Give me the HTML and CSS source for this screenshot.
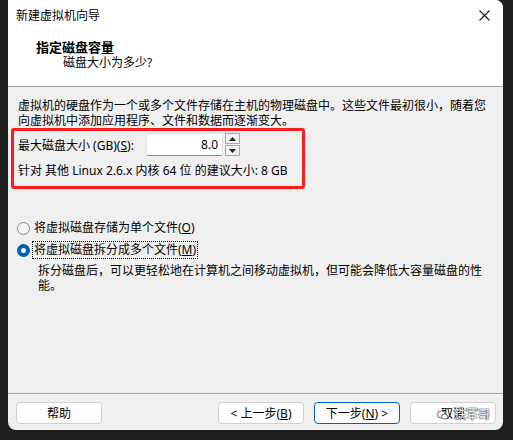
FILE: index.html
```html
<!DOCTYPE html>
<html lang="zh-CN">
<head>
    <meta charset="UTF-8">
    <title>新建虚拟机向导</title>
    <link rel="stylesheet" href="styles.css">
</head>
<body>
<div class="window">
    <div class="titlebar">
        <span class="titlebar__text">新建虚拟机向导</span>
        <span class="close">
            <svg width="11" height="11" viewBox="0 0 11 11"><path d="M0.5 0.5 L10.5 10.5 M10.5 0.5 L0.5 10.5" stroke="#1a1a1a" stroke-width="1.1" fill="none"/></svg>
        </span>
    </div>

    <div class="header">
        <div class="header__title">指定磁盘容量</div>
        <div class="header__sub">磁盘大小为多少?</div>
    </div>

    <div class="content">
        <p class="intro">虚拟机的硬盘作为一个或多个文件存储在主机的物理磁盘中。这些文件最初很小，随着您<br>向虚拟机中添加应用程序、文件和数据而逐渐变大。</p>

        <div class="highlight">
            <div class="size-row">
                <label class="size-label">最大磁盘大小 (GB)(<u>S</u>):</label>
                <input type="text" class="size-input" value="8.0">
                <div class="spinner">
                    <button class="spin"><svg width="7" height="4" viewBox="0 0 7 4"><path d="M0 4 L3.5 0 L7 4 Z" fill="#222"/></svg></button>
                    <button class="spin"><svg width="7" height="4" viewBox="0 0 7 4"><path d="M0 0 L3.5 4 L7 0 Z" fill="#222"/></svg></button>
                </div>
            </div>
            <div class="hint">针对 其他 Linux 2.6.x 内核 64 位 的建议大小: 8 GB</div>
        </div>

        <div class="options">
            <div class="radio-row">
                <span class="radio"></span>
                <span class="radio-label">将虚拟磁盘存储为单个文件(<u>O</u>)</span>
            </div>
            <div class="radio-row">
                <span class="radio radio--on"></span>
                <span class="radio-label radio-label--focus">将虚拟磁盘拆分成多个文件(<u>M</u>)</span>
            </div>
            <p class="desc">拆分磁盘后，可以更轻松地在计算机之间移动虚拟机，但可能会降低大容量磁盘的性<br>能。</p>
        </div>
    </div>

    <div class="footer">
        <button class="btn">帮助</button>
        <div class="footer__right">
            <button class="btn">&lt; 上一步(<u>B</u>)</button>
            <button class="btn btn--default">下一步(<u>N</u>) &gt;</button>
            <button class="btn btn--cancel">取消
                <span class="watermark">
                    <svg width="11" height="10" viewBox="0 0 11 10"><ellipse cx="4.5" cy="4.5" rx="4" ry="3.6" fill="#fff" stroke="#444" stroke-width="0.8"/><ellipse cx="7.5" cy="6.5" rx="3" ry="2.6" fill="#fff" stroke="#444" stroke-width="0.8"/></svg>
                    <span class="watermark__text">铁军哥</span>
                </span>
            </button>
        </div>
    </div>
</div>
</body>
</html>
```

FILE: styles.css
```css
body {
  margin: 0;
  background: #1f1f1f;
  font-family: "Noto Sans", "Noto Sans CJK SC", sans-serif;
  font-size: 12px;
  color: #000;
}

.window {
  margin-left: 8px;
  width: 495px;
  height: 430px;
  background: #f0f0f0;
  border-radius: 0 8px 8px 8px;
  overflow: hidden;
  display: flex;
  flex-direction: column;
}

.titlebar {
  height: 30px;
  background: #fff;
  display: flex;
  align-items: center;
  justify-content: space-between;
  padding: 0 8px 0 8px;
}

.close {
  display: flex;
  margin-right: 5px;
}

.header {
  background: #fff;
  height: 57px;
  border-bottom: 1px solid #a0a0a0;
  box-sizing: border-box;
  padding-top: 9px;
}

.header__title {
  margin-left: 28px;
  font-size: 13px;
  font-weight: bold;
  line-height: 16px;
}

.header__sub {
  margin-left: 55px;
  line-height: 16px;
}

.content {
  flex: 1;
  padding-top: 11px;
}

.intro {
  margin: 0 0 0 10px;
  line-height: 15px;
}

.highlight {
  margin-left: 3px;
  width: 294px;
  height: 61px;
  box-sizing: border-box;
  border: 3px solid #ff1c1c;
  border-radius: 3px;
  padding: 2px 0 0 4px;
}

.size-row {
  display: flex;
  align-items: center;
  height: 23px;
}

.size-label {
  width: 128px;
}

.size-input {
  width: 77px;
  height: 23px;
  box-sizing: border-box;
  border: 1px solid #e3e3e3;
  border-bottom-color: #8a8a8a;
  border-radius: 2px;
  background: #fff;
  text-align: right;
  padding: 0 4px 0 0;
  font-family: "Noto Sans", sans-serif;
  font-size: 12px;
  color: #000;
  margin: 0;
}

.spinner {
  margin-left: 2px;
  width: 15px;
  height: 23px;
  box-sizing: border-box;
  display: flex;
  flex-direction: column;
  gap: 1px;
}

.spin {
  flex: 1;
  margin: 0;
  padding: 0;
  border: 1px solid #a9a9a9;
  background: #f3f3f3;
  display: flex;
  align-items: center;
  justify-content: center;
}

.hint {
  margin-top: 7px;
  line-height: 16px;
}

.options {
  margin-top: 29px;
}

.radio-row {
  display: flex;
  align-items: center;
  height: 20px;
  margin-left: 10px;
  margin-bottom: 2px;
}

.radio {
  width: 13px;
  height: 13px;
  box-sizing: border-box;
  border-radius: 50%;
  border: 1px solid #8a8a8a;
  background: #f6f6f6;
  margin-left: -1px;
  margin-right: 2px;
}

.radio--on {
  border: 4px solid #005fb8;
  background: #fff;
}

.radio-label {
  line-height: 16px;
  padding: 0 1px;
  border: 1px dotted transparent;
}

.radio-label--focus {
  border-color: #000;
}

.desc {
  margin: 3px 0 0 30px;
  line-height: 15px;
}

.footer {
  height: 37px;
  border-top: 1px solid #a0a0a0;
  box-sizing: border-box;
  display: flex;
  justify-content: space-between;
  padding: 8px 7px 0 8px;
}

.footer__right {
  display: flex;
  gap: 10px;
}

.btn {
  position: relative;
  width: 86px;
  height: 22px;
  margin: 0;
  padding: 0;
  border: 1px solid #d0d0d0;
  border-radius: 4px;
  background: #fdfdfd;
  font-family: "Noto Sans", "Noto Sans CJK SC", sans-serif;
  font-size: 12px;
  color: #000;
}

.btn--default {
  border-color: #005fb8;
}

.watermark {
  position: absolute;
  left: 26px;
  top: 5px;
  display: flex;
  align-items: center;
  gap: 6px;
  color: #fff;
  font-size: 12px;
  line-height: 12px;
  text-shadow: 0 0 1px #222, 0 0 1px #222, 0 0 1px #222;
}

.watermark__text {
  margin-top: 1px;
}
```
